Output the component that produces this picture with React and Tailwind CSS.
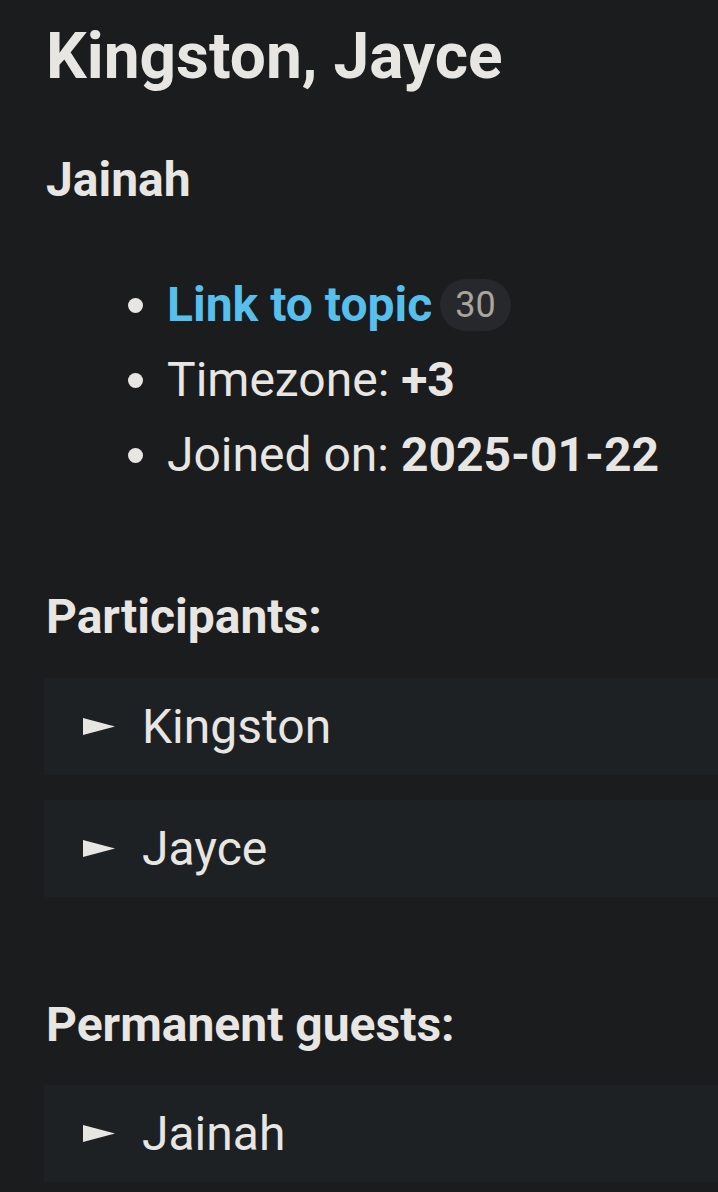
import React from "react";

function Tri() {
  return (
    <svg width="32" height="17" viewBox="0 0 32 17" className="shrink-0">
      <polygon points="0,0 32,8.5 0,17" fill="#e8e6e3" />
    </svg>
  );
}

function Row({ name, className = "" }) {
  return (
    <div className={`bg-[#1e2123] -mr-[46px] h-[97px] flex items-center pl-[39px] ${className}`}>
      <Tri />
      <span className="ml-[27px] text-[48px] leading-[72px]">{name}</span>
    </div>
  );
}

function Li({ children }) {
  return (
    <li className="flex items-start">
      <span className="mt-[31px] w-[15px] h-[15px] rounded-full bg-[#e8e6e3] shrink-0" />
      <span className="ml-[24px]">{children}</span>
    </li>
  );
}

export default function App() {
  return (
    <div
      className="min-h-[1192px] bg-[#1b1c1e] text-[#e8e6e3] px-[44px] overflow-hidden"
      style={{ fontFamily: "Roboto, 'Noto Sans', sans-serif" }}
    >
      <h1 className="pt-[19px] text-[64px] leading-[76px] font-bold pl-[2px]">Kingston, Jayce</h1>
      <h3 className="mt-[57px] text-[48px] leading-[56px] font-bold pl-[2px]">Jainah</h3>
      <ul className="mt-[59px] pl-[84px] text-[48px] leading-[75px]">
        <Li>
          <span className="inline-flex items-center">
            <a className="font-bold text-[#57bfec]">Link to topic</a>
            <span className="ml-[8px] inline-flex items-center justify-center h-[52px] px-[15px] rounded-full bg-[#26282b] text-[36px] text-[#aaa49b] leading-none">
              30
            </span>
          </span>
        </Li>
        <Li>
          Timezone: <b className="font-bold">+3</b>
        </Li>
        <Li>
          Joined on: <b className="font-bold">2025-01-22</b>
        </Li>
      </ul>
      <h3 className="mt-[97px] text-[48px] leading-[56px] font-bold pl-[2px]">Participants:</h3>
      <Row name="Kingston" className="mt-[33px]" />
      <Row name="Jayce" className="mt-[25px]" />
      <h3 className="mt-[100px] text-[48px] leading-[56px] font-bold pl-[2px]">Permanent guests:</h3>
      <Row name="Jainah" className="mt-[32px]" />
    </div>
  );
}
